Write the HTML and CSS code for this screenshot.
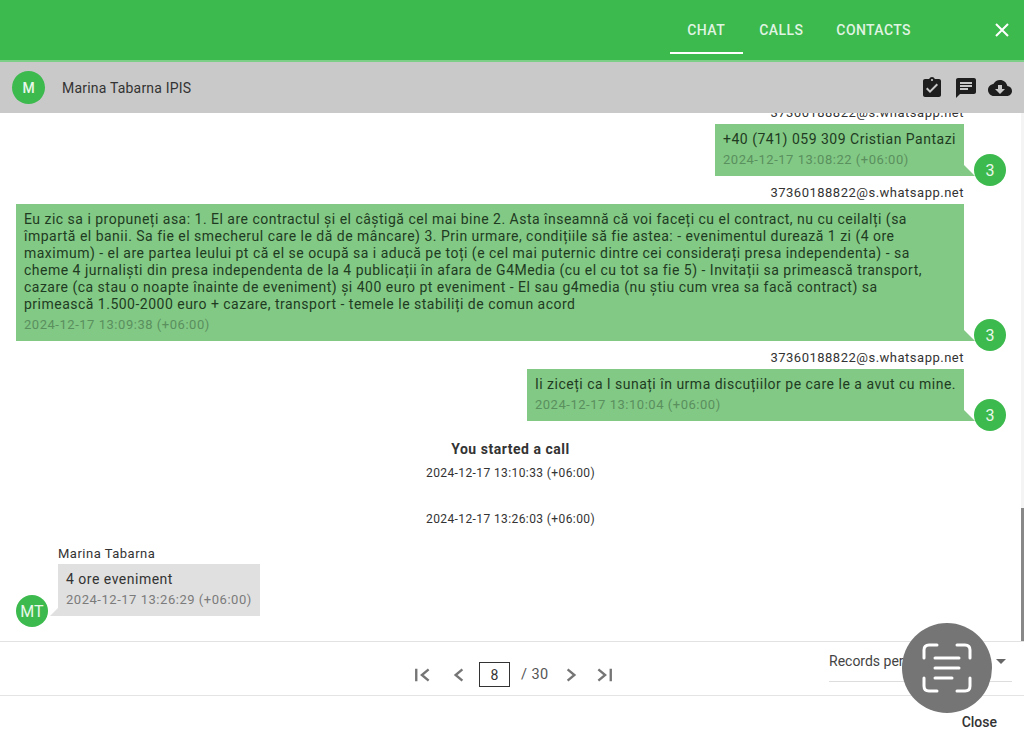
FILE: index.html
```html
<!DOCTYPE html>
<html lang="ro">
<head>
<meta charset="utf-8">
<title>Chat</title>
<link rel="stylesheet" href="styles.css">
</head>
<body>
<div class="dialog">
  <header class="topbar">
    <nav class="tabs">
      <a class="tab active">CHAT</a>
      <a class="tab">CALLS</a>
      <a class="tab">CONTACTS</a>
    </nav>
    <svg class="close-x" viewBox="0 0 14 14"><path d="M1 1L13 13M13 1L1 13"/></svg>
  </header>
  <div class="subbar">
    <span class="avatar small-av">M</span>
    <span class="subname">Marina Tabarna IPIS</span>
    <div class="subicons">
      <svg viewBox="0 0 24 24"><path d="M19 3h-4.18C14.4 1.84 13.3 1 12 1s-2.4.84-2.82 2H5c-1.1 0-2 .9-2 2v14c0 1.1.9 2 2 2h14c1.1 0 2-.9 2-2V5c0-1.1-.9-2-2-2zm-7 0c.55 0 1 .45 1 1s-.45 1-1 1-1-.45-1-1 .45-1 1-1zm-2 14l-4-4 1.41-1.41L10 14.17l6.59-6.59L18 9l-8 8z"/></svg>
      <svg viewBox="0 0 24 24"><path d="M20 2H4c-1.1 0-2 .9-2 2v18l4-4h14c1.1 0 2-.9 2-2V4c0-1.1-.9-2-2-2zM6 14v-2h8v2H6zm12-3H6V9h12v2zm0-3H6V6h12v2z"/></svg>
      <svg viewBox="0 0 24 24"><path d="M19.35 10.04C18.67 6.59 15.64 4 12 4 9.11 4 6.6 5.64 5.35 8.04 2.34 8.36 0 10.91 0 14c0 3.31 2.69 6 6 6h13c2.76 0 5-2.24 5-5 0-2.64-2.05-4.78-4.65-4.96zM17 13l-5 5-5-5h3V9h4v4h3z"/></svg>
    </div>
  </div>
  <main class="thread">
    <div class="thread-inner">
      <div class="row out">
        <div class="sender">37360188822@s.whatsapp.net</div>
        <div class="line">
          <div class="bubble green">
            <div class="text">+40 (741) 059 309 Cristian Pantazi</div>
            <div class="time">2024-12-17 13:08:22 (+06:00)</div>
          </div>
          <span class="avatar">3</span>
        </div>
      </div>
      <div class="row out">
        <div class="sender">37360188822@s.whatsapp.net</div>
        <div class="line">
          <div class="bubble green wide">
            <div class="text">Eu zic sa i propuneți asa: 1. El are contractul și el câștigă cel mai bine 2. Asta înseamnă că voi faceți cu el contract, nu cu ceilalți (sa<br>împartă el banii. Sa fie el smecherul care le dă de mâncare) 3. Prin urmare, condițiile să fie astea: - evenimentul durează 1 zi (4 ore<br>maximum) - el are partea leului pt că el se ocupă sa i aducă pe toți (e cel mai puternic dintre cei considerați presa independenta) - sa<br>cheme 4 jurnaliști din presa independenta de la 4 publicații în afara de G4Media (cu el cu tot sa fie 5) - Invitații sa primească transport,<br>cazare (ca stau o noapte înainte de eveniment) și 400 euro pt eveniment - El sau g4media (nu știu cum vrea sa facă contract) sa<br>primească 1.500-2000 euro + cazare, transport - temele le stabiliți de comun acord</div>
            <div class="time">2024-12-17 13:09:38 (+06:00)</div>
          </div>
          <span class="avatar">3</span>
        </div>
      </div>
      <div class="row out">
        <div class="sender">37360188822@s.whatsapp.net</div>
        <div class="line">
          <div class="bubble green">
            <div class="text">Ii ziceți ca l sunați în urma discuțiilor pe care le a avut cu mine.</div>
            <div class="time">2024-12-17 13:10:04 (+06:00)</div>
          </div>
          <span class="avatar">3</span>
        </div>
      </div>
      <div class="event">
        <div class="event-title">You started a call</div>
        <div class="event-time">2024-12-17 13:10:33 (+06:00)</div>
        <div class="event-time second">2024-12-17 13:26:03 (+06:00)</div>
      </div>
      <div class="row in">
        <div class="sender">Marina Tabarna</div>
        <div class="line">
          <span class="avatar">MT</span>
          <div class="bubble grey">
            <div class="text">4 ore eveniment</div>
            <div class="time">2024-12-17 13:26:29 (+06:00)</div>
          </div>
        </div>
      </div>
    </div>
    <div class="scrolltrack"><div class="scrollthumb"></div></div>
  </main>
  <div class="pager">
    <div class="pager-nav">
      <svg class="nav-first" viewBox="0 0 16 16"><path d="M2 2.5V13.5M13 3L7 8L13 13"/></svg>
      <svg class="nav-prev" viewBox="0 0 16 16"><path d="M11 3L5 8L11 13"/></svg>
      <span class="pagebox">8</span>
      <span class="pagetotal">/ 30</span>
      <svg class="nav-next" viewBox="0 0 16 16"><path d="M5 3L11 8L5 13"/></svg>
      <svg class="nav-last" viewBox="0 0 16 16"><path d="M3 3L9 8L3 13M14 2.5V13.5"/></svg>
    </div>
    <div class="perpage">
      <span>Records per page</span>
      <span class="caret"></span>
    </div>
  </div>
  <footer class="actions"><span class="close-btn">Close</span></footer>
</div>
<div class="scan-fab">
  <svg viewBox="0 0 50 50"><path d="M2 15V7Q2 2 7 2H15M35 2H43Q48 2 48 7V15M2 35V43Q2 48 7 48H15M48 35V43Q48 48 43 48H35M13 15H37M13 25H37M13 35H30"/></svg>
</div>
</body>
</html>
```
FILE: styles.css
```css
* { box-sizing: border-box; }
html, body { margin: 0; height: 100%; overflow: hidden; }
body { font-family: Roboto, "Liberation Sans", sans-serif; background: #fff; color: #333; position: relative; }
.dialog { width: 1024px; height: 740px; display: flex; flex-direction: column; }
.topbar { height: 62px; flex: none; background: #3dba4e; border-bottom: 2px solid #7ccf86; display: flex; align-items: flex-start; justify-content: flex-end; padding-right: 15px; }
.tabs { display: flex; }
.tab { height: 54px; padding: 22px 17px 0 16px; font-size: 14px; font-weight: 500; line-height: 16px; color: rgba(255,255,255,.85); border-bottom: 2px solid transparent; letter-spacing: .4px; }
.tab.active { border-bottom-color: #fff; width: 73px; padding-left: 17px; }
.close-x { width: 14px; height: 14px; margin-top: 23px; margin-left: 67px; fill: none; stroke: #fff; stroke-width: 2; }
.subbar { height: 51px; flex: none; background: #c9c9c9; display: flex; align-items: center; padding: 0 12px; }
.avatar { flex: none; width: 32px; height: 32px; border-radius: 50%; background: #3dba4e; color: #e9f8ea; font-size: 16px; display: flex; align-items: center; justify-content: center; }
.small-av { width: 33px; height: 33px; font-size: 14px; font-weight: 500; }
.subname { margin-left: 17px; font-size: 14px; letter-spacing: .2px; color: #333; }
.subicons { margin-left: auto; display: flex; gap: 10px; align-items: center; }
.subicons svg { width: 24px; height: 24px; fill: #1e1e1e; }
.thread { flex: none; height: 529px; position: relative; overflow: hidden; border-bottom: 1px solid #e2e2e2; }
.thread-inner { margin-top: -9px; }
.row { display: flex; flex-direction: column; }
.row.out { align-items: flex-end; padding: 0 60px 0 16px; margin-bottom: 8px; }
.sender { font-size: 13px; line-height: 18px; height: 20px; letter-spacing: .5px; color: #333; }
.line { display: flex; position: relative; }
.row.out .line { width: 100%; justify-content: flex-end; }
.bubble { padding: 7px 8px 8px; position: relative; font-size: 14px; line-height: 17px; letter-spacing: .5px; }
.bubble.green { background: #82c985; color: #1f3b22; }
.bubble.wide { width: 948px; letter-spacing: .49px; }
.bubble.grey { background: #e0e0e0; color: #333; }
.time { margin-top: 4px; font-size: 13px; line-height: 16px; letter-spacing: .53px; color: #5a8f5e; }
.bubble.grey .time { color: #7b7b7b; }
.row.out .bubble::after { content: ""; position: absolute; right: -11px; bottom: 0; border-left: 11px solid #82c985; border-top: 11px solid transparent; }
.row.out .avatar { position: absolute; right: -42px; bottom: -10px; }
.row.in { margin-left: 58px; margin-top: 18px; width: max-content; }
.row.in .sender { height: 19px; }
.row.in .avatar { position: absolute; left: -42px; bottom: -11px; }
.row.in .bubble::before { content: ""; position: absolute; left: -8px; bottom: 0; border-right: 8px solid #e0e0e0; border-top: 8px solid transparent; }
.event { text-align: center; padding: 11px 3px 0 0; }
.event-title { font-size: 14px; font-weight: 700; line-height: 18px; letter-spacing: .53px; color: #333; }
.event-time { margin-top: 7px; font-size: 12px; line-height: 16px; letter-spacing: .4px; color: #333; }
.event-time.second { margin-top: 30px; }
.scrolltrack { position: absolute; right: 0; top: 0; bottom: 0; width: 3px; background: #f4f4f4; display: flex; align-items: flex-end; }
.scrollthumb { width: 3px; height: 133px; background: #888; }
.pager { height: 54px; flex: none; border-bottom: 1px solid #e4e4e4; position: relative; }
.pager-nav { position: absolute; left: 414px; top: 20px; display: flex; align-items: center; color: #666; font-size: 14.5px; }
.pager-nav svg { width: 18px; height: 18px; fill: none; stroke: #757575; stroke-width: 2.1; }
.nav-prev { margin-left: 18px; }
.pagebox { width: 31px; height: 25px; border: 1px solid #333; display: flex; align-items: center; justify-content: center; font-size: 14px; color: #333; margin-left: 11px; }
.pagetotal { margin-left: 11px; letter-spacing: .4px; color: #555; }
.nav-next { margin-left: 14px; }
.nav-last { margin-left: 15px; }
.perpage { position: absolute; left: 829px; top: 8px; width: 183px; height: 32px; border-bottom: 1px solid #ddd; font-size: 14px; line-height: 22px; color: #444; }
.caret { position: absolute; right: 6px; top: 9px; border-left: 5.5px solid transparent; border-right: 5.5px solid transparent; border-top: 5px solid #666; }
.actions { flex: none; height: 44px; display: flex; justify-content: flex-end; padding: 18px 27px 0 0; }
.close-btn { font-size: 14px; font-weight: 500; line-height: 16px; color: #333; }
.scan-fab { position: absolute; left: 902px; top: 623px; width: 90px; height: 90px; border-radius: 50%; background: #757575; display: flex; align-items: center; justify-content: center; }
.scan-fab svg { width: 50px; height: 50px; fill: none; stroke: #fff; stroke-width: 3; stroke-linecap: round; }
```
